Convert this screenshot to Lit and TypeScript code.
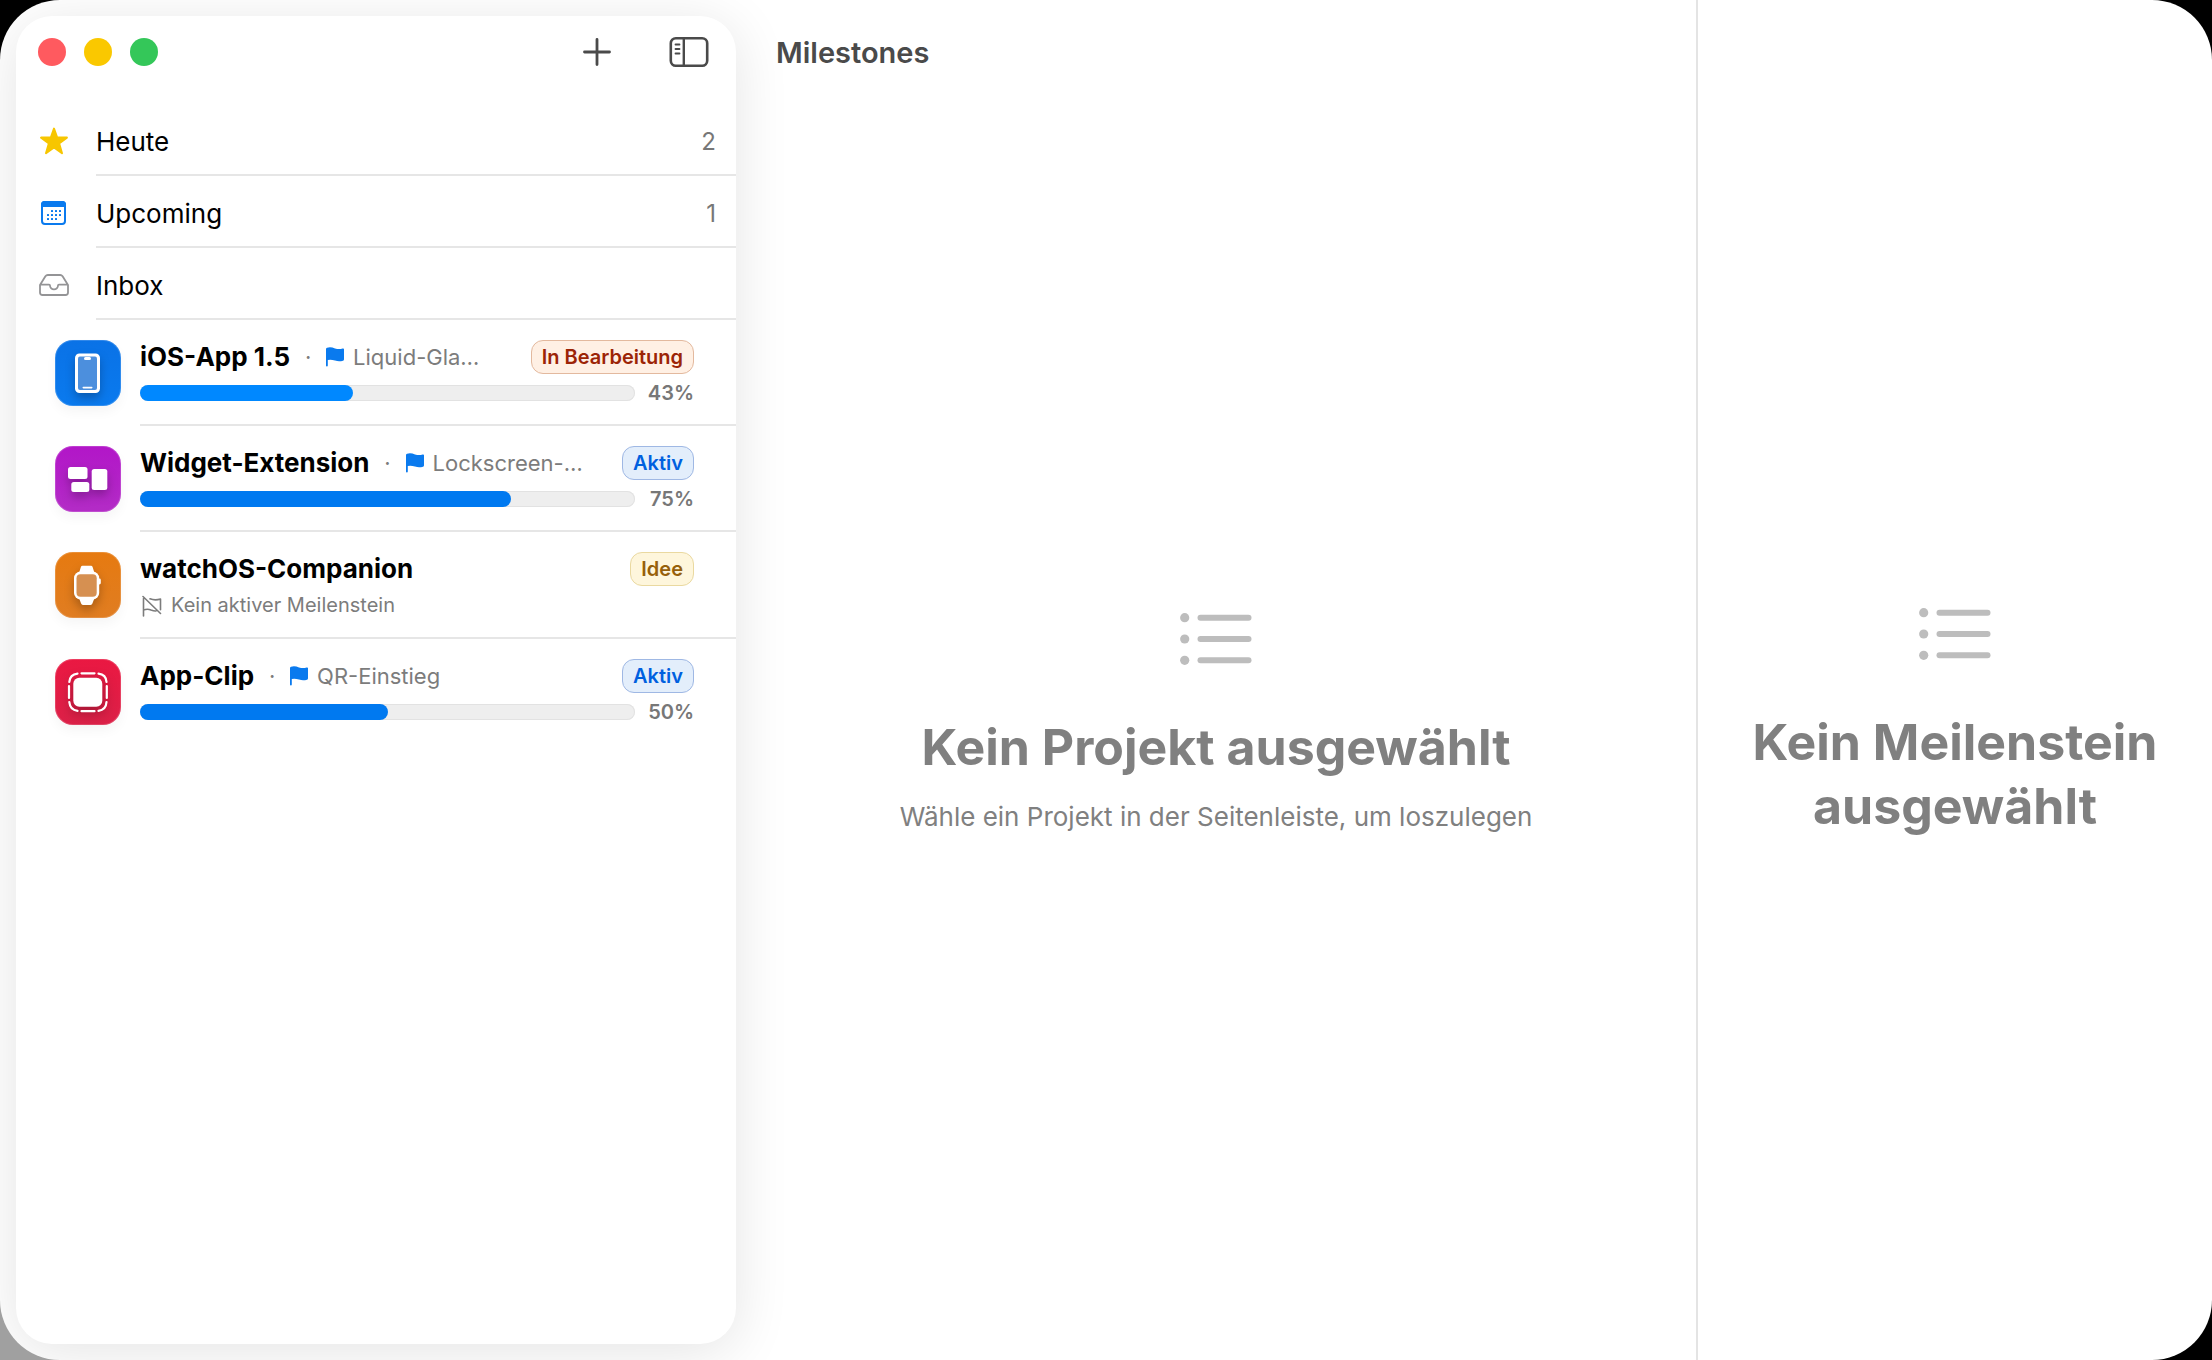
import { LitElement, html, css, svg, nothing } from "lit";
import { customElement, property } from "lit/decorators.js";

type IconName =
  | "star" | "calendar" | "tray" | "plus" | "sidebar" | "flag" | "flag-slash" | "list"
  | "phone" | "widgets" | "watch" | "clip";

const dots = [
  [13, 11], [17, 11], [21, 11],
  [9, 15], [13, 15], [17, 15], [21, 15],
  [9, 19], [13, 19], [17, 19],
];

const icons: Record<IconName, { w: number; h: number; body: unknown }> = {
  star: {
    w: 28, h: 28,
    body: svg`<path fill="#f7c600" stroke="#f7c600" stroke-width="2" stroke-linejoin="round"
      d="M14 1.600 L17.100 10.400 L26.900 10.600 L19.100 16.400 L22 26.200 L14 20.500 L6 26.200 L8.900 16.400 L1.100 10.600 L10.900 10.400 Z"/>`,
  },
  calendar: {
    w: 30, h: 26,
    body: svg`<rect x="3" y="2" width="23" height="22" rx="3" fill="#fff" stroke="#0a7aee" stroke-width="2"/>
      <path d="M2 7V4.500a3.500 3.500 0 0 1 3.500-3.500h18a3.500 3.500 0 0 1 3.500 3.500V7z" fill="#0a7aee"/>
      ${dots.map(([x, y]) => svg`<rect x=${x - 1} y=${y - 1} width="2" height="2" rx=".5" fill="#0a7aee"/>`)}`,
  },
  tray: {
    w: 32, h: 24,
    body: svg`<path fill="none" stroke="#949496" stroke-width="1.800" stroke-linejoin="round" stroke-linecap="round"
      d="M2 12 L7.400 3.200 Q8.300 2 9.800 2 H22.200 Q23.700 2 24.600 3.200 L30 12 V19.500 Q30 22 27.500 22 H4.500 Q2 22 2 19.500 Z M2.300 11.600 H11 Q12 11.600 12 12.600 A4 3.700 0 0 0 20 12.600 Q20 11.600 21 11.600 H29.700"/>`,
  },
  plus: {
    w: 28, h: 28,
    body: svg`<path d="M14 1.500v25M1.500 14h25" stroke="#4a4a4a" stroke-width="2.800" stroke-linecap="round"/>`,
  },
  sidebar: {
    w: 40, h: 32,
    body: svg`<g fill="none" stroke="#4a4a4a" stroke-linecap="round">
      <rect x="1.800" y="2.200" width="36.400" height="27.600" rx="5" stroke-width="2.600"/>
      <path d="M14.800 2.500v27" stroke-width="2.400"/>
      <path d="M6.500 8.500h4M6.500 13h4M6.500 17.500h4" stroke-width="1.800"/></g>`,
  },
  flag: {
    w: 18, h: 20,
    body: svg`<path fill="#0a7aee" d="M0 2 Q0 .9 1 .7 Q4.800 -.4 9 1.400 Q13 2.700 16.600 1.500 Q18 1.100 18 2.300 V12.300 Q18 13.400 17 13.700 Q13 15 9 13.600 Q5 12.200 1.800 13 V18.600 Q1.800 19.500 .9 19.500 Q0 19.500 0 18.600 Z"/>`,
  },
  "flag-slash": {
    w: 20, h: 22,
    body: svg`<g fill="none" stroke="#7c7c7c" stroke-width="1.600" stroke-linecap="round" stroke-linejoin="round">
      <path d="M1.500 3.500V21M1.500 15Q5.500 13.500 9 15Q12 16.200 14 16M8 3.800Q13 5.800 18.500 4V14.800M1 1.500L18.500 18.500"/></g>`,
  },
  list: {
    w: 72, h: 52,
    body: svg`<g fill="#bdbdbd">${[4.7, 26, 47.3].map(
      (y) => svg`<circle cx="4.700" cy=${y} r="4.600"/><rect x="17.500" y=${y - 3} width="54" height="6" rx="3"/>`,
    )}</g>`,
  },
  phone: {
    w: 66, h: 66,
    body: svg`<rect x="20" y="13.500" width="25" height="39.500" rx="4.500" fill="#fff"/>
      <rect x="23" y="16.500" width="19" height="33.500" rx="2" fill="#4c8fdd"/>
      <rect x="29" y="17" width="7" height="3" rx="1.500" fill="#fff"/>
      <rect x="27.500" y="46.800" width="10" height="1.600" rx=".8" fill="#fff"/>`,
  },
  widgets: {
    w: 66, h: 66,
    body: svg`<g fill="#fff"><rect x="13" y="21" width="19.500" height="12" rx="2.500"/>
      <rect x="16.300" y="36" width="18" height="10" rx="2.500"/>
      <rect x="36.700" y="23" width="15.600" height="21" rx="2.500"/></g>`,
  },
  watch: {
    w: 66, h: 66,
    body: svg`<g fill="#fff"><path d="M27.500 13.800H36Q37.200 13.800 37.600 15L39.500 21H24L25.900 15Q26.300 13.800 27.500 13.800Z
        M24 46H39.500L37.400 51.600Q36.900 53 35.600 53H27.900Q26.600 53 26.100 51.600Z"/>
      <rect x="19" y="19.500" width="25.200" height="28" rx="6.500"/>
      <rect x="43" y="26.500" width="2.800" height="6" rx="1.400"/></g>
      <rect x="21.500" y="22.200" width="20.200" height="22.600" rx="4" fill="#d69051"/>`,
  },
  clip: {
    w: 66, h: 66,
    body: svg`<rect x="18.300" y="18.700" width="29" height="29" rx="6" fill="#fff"/>
      <g fill="none" stroke="#fff" stroke-width="2.200" stroke-linecap="round">
      <path d="M26.500 14.300h13M26.500 52.200h13M14 27v12M51.800 27v12"/>
      <path d="M22.500 14.700Q15 15.500 14.300 23M43.500 14.700Q51 15.500 51.500 23M14.300 43Q15 51 22.500 51.800M51.500 43Q51 51 43.500 51.800"/></g>`,
  },
};

const icon = (name: IconName) => {
  const { w, h, body } = icons[name];
  return html`<svg width=${w} height=${h} viewBox="0 0 ${w} ${h}" aria-hidden="true">${body}</svg>`;
};

const base = css`
  *, *::before, *::after { box-sizing: border-box; }
  svg { display: block; flex: none; }
  button { margin: 0; padding: 0; border: 0; background: none; font: inherit; color: inherit; text-align: left; }
`;

type Status = "active" | "progress" | "idea";

interface Project {
  name: string;
  icon: IconName;
  tint: string;
  milestone?: string;
  progress?: number;
  current?: boolean;
  status: Status;
}

const statusLabels: Record<Status, string> = {
  active: "Aktiv",
  progress: "In Bearbeitung",
  idea: "Idee",
};

const shortcuts: { label: string; icon: IconName; count?: number }[] = [
  { label: "Heute", icon: "star", count: 2 },
  { label: "Upcoming", icon: "calendar", count: 1 },
  { label: "Inbox", icon: "tray" },
];

const projects: Project[] = [
  { name: "iOS-App 1.5", icon: "phone", tint: "blue", milestone: "Liquid-Gla…", progress: 43, current: true, status: "progress" },
  { name: "Widget-Extension", icon: "widgets", tint: "purple", milestone: "Lockscreen-…", progress: 75, status: "active" },
  { name: "watchOS-Companion", icon: "watch", tint: "orange", status: "idea" },
  { name: "App-Clip", icon: "clip", tint: "red", milestone: "QR-Einstieg", progress: 50, status: "active" },
];

@customElement("project-row")
export class ProjectRow extends LitElement {
  @property({ attribute: false }) project!: Project;

  static styles = [base, css`
    :host { display: block; }
    .row { display: flex; width: 100%; padding-left: 39px; gap: 19px; }
    .tile { flex: none; width: 66px; height: 66px; margin-top: 20px; border-radius: 18px;
      box-shadow: inset 0 0 0 1px rgba(255, 255, 255, .16), 0 6px 12px rgba(0, 0, 0, .04); }
    .tile svg { filter: drop-shadow(0 5px 5px rgba(0, 0, 0, .25)); }
    .blue { background: linear-gradient(#0a72e6, #0a7aee); }
    .purple { background: linear-gradient(#b216c8, #b32cc6); }
    .orange { background: linear-gradient(#e67a10, #e07d22); }
    .red { background: linear-gradient(#ea1842, #dc2148); }
    .body { flex: 1; min-width: 0; padding: 20px 42px 18px 0; border-bottom: 2px solid #e6e6e6; }
    :host(:last-child) .body { border-color: transparent; }
    .top { display: flex; align-items: center; height: 34px; }
    .name { font-size: 26px; line-height: 34px; font-weight: 700; color: #000; white-space: nowrap; }
    .dot { width: 36px; text-align: center; font-size: 22px; color: #7c7c7c; }
    .milestone { margin-left: 9px; font-size: 22px; line-height: 34px; color: #7c7c7c; white-space: nowrap; }
    .badge { margin-left: auto; padding: 0 10px; border: 1px solid; border-radius: 12px; font-size: 20px;
      line-height: 32px; font-weight: 600; white-space: nowrap; }
    .active { color: #0060df; background: #e3eefb; border-color: #9fb8e4; }
    .progress { color: #9c2406; background: #fff0e4; border-color: #e3b99e; }
    .idea { color: #96600a; background: #fef6dc; border-color: #ead9a0; }
    .meter { display: flex; align-items: center; justify-content: space-between; margin-top: 6px; height: 26px; gap: 12px; }
    .track { flex: 1; height: 16px; border-radius: 8px; background: #eee; box-shadow: inset 0 0 0 1px #e2e2e2; }
    .fill { height: 16px; border-radius: 8px; background: #0079f0; }
    .fill.current { background: #08f; }
    .percent { width: 47px; text-align: right; font-size: 20px; line-height: 26px; font-weight: 600; color: #777; }
    .none { display: flex; align-items: center; gap: 9px; margin-top: 6px; padding-left: 2px; font-size: 20px;
      line-height: 27px; color: #7c7c7c; }
  `];

  render() {
    const p = this.project;
    return html`<button class="row" type="button">
      <span class="tile ${p.tint}">${icon(p.icon)}</span>
      <div class="body">
        <div class="top">
          <span class="name">${p.name}</span>
          ${p.milestone
            ? html`<span class="dot">·</span>${icon("flag")}<span class="milestone">${p.milestone}</span>`
            : nothing}
          <span class="badge ${p.status}">${statusLabels[p.status]}</span>
        </div>
        ${p.progress === undefined
          ? html`<div class="none">${icon("flag-slash")}<span>Kein aktiver Meilenstein</span></div>`
          : html`<div class="meter">
              <div class="track"><div class="fill ${p.current ? "current" : ""}" style="width:${p.progress}%"></div></div>
              <span class="percent">${p.progress}%</span>
            </div>`}
      </div>
    </button>`;
  }
}

@customElement("empty-state")
export class EmptyState extends LitElement {
  @property() heading = "";
  @property() hint = "";

  static styles = [base, css`
    :host { display: flex; flex: 1; flex-direction: column; align-items: center; justify-content: center;
      padding: 0 40px; text-align: center; color: #808080; }
    .heading { margin: 50px 0 0; font-size: 50px; line-height: 64px; font-weight: 700; }
    .hint { margin: 22px 0 0; font-size: 26px; line-height: 32px; }
  `];

  render() {
    return html`${icon("list")}
      <h2 class="heading">${this.heading}</h2>
      ${this.hint ? html`<p class="hint">${this.hint}</p>` : nothing}`;
  }
}

@customElement("app-root")
export class AppRoot extends LitElement {
  static styles = [base, css`
    :host { display: block; background: radial-gradient(circle at 0 100%, #a0a0a0 80px, #000 100px);
      font-family: Inter, "Liberation Sans", sans-serif; }
    .window { display: grid; grid-template-columns: 736px minmax(0, 1fr) 516px; min-height: 100vh;
      background: #fff; border-radius: 60px; overflow: hidden; }
    .gutter { display: flex; padding: 16px 0 16px 16px; }
    .sidebar { flex: 1; min-width: 0; background: #fff; border-radius: 36px;
      box-shadow: 0 8px 56px rgba(0, 0, 0, .11); }
    .toolbar { display: flex; align-items: center; height: 72px; padding: 0 27px 0 22px; }
    .lights { display: flex; gap: 18px; margin-right: auto; }
    .light { width: 28px; height: 28px; border-radius: 50%; }
    .close { background: #ff5a5f; }
    .minimise { background: #fac800; }
    .zoom { background: #34c759; }
    .tools { display: flex; align-items: center; gap: 58px; }
    .shortcuts { padding-top: 16px; }
    .shortcut { display: flex; align-items: center; width: 100%; height: 72px; }
    .glyph { display: flex; flex: none; justify-content: center; width: 76px; margin-right: 4px; padding-top: 1px; }
    .label { display: flex; flex: 1; align-items: center; justify-content: space-between; height: 72px;
      padding: 4px 20px 0 0; border-bottom: 2px solid #e6e6e6; font-size: 26px; color: #000; }
    .count { font-size: 24px; color: #777; }
    .pane { display: flex; flex-direction: column; min-width: 0; }
    .detail { border-left: 2px solid #e4e4e4; }
    .header { display: flex; height: 86px; padding: 32px 40px 12px; }
    .title { margin: 0; font-size: 29px; line-height: 42px; font-weight: 600; color: #4a4a4a; }
  `];

  render() {
    return html`<div class="window">
      <div class="gutter">
        <nav class="sidebar" aria-label="Seitenleiste">
          <div class="toolbar">
            <div class="lights">
              <button class="light close" type="button" aria-label="Schließen"></button>
              <button class="light minimise" type="button" aria-label="Minimieren"></button>
              <button class="light zoom" type="button" aria-label="Zoomen"></button>
            </div>
            <div class="tools">
              <button type="button" aria-label="Neues Projekt">${icon("plus")}</button>
              <button type="button" aria-label="Seitenleiste umschalten">${icon("sidebar")}</button>
            </div>
          </div>
          <div class="shortcuts">
            ${shortcuts.map((s) => html`<button class="shortcut" type="button">
              <span class="glyph">${icon(s.icon)}</span>
              <span class="label"><span>${s.label}</span>${s.count ? html`<span class="count">${s.count}</span>` : nothing}</span>
            </button>`)}
          </div>
          <div>${projects.map((p) => html`<project-row .project=${p}></project-row>`)}</div>
        </nav>
      </div>
      <main class="pane">
        <header class="header"><h1 class="title">Milestones</h1></header>
        <empty-state heading="Kein Projekt ausgewählt" hint="Wähle ein Projekt in der Seitenleiste, um loszulegen"></empty-state>
      </main>
      <aside class="pane detail">
        <div class="header"></div>
        <empty-state heading="Kein Meilenstein ausgewählt"></empty-state>
      </aside>
    </div>`;
  }
}
